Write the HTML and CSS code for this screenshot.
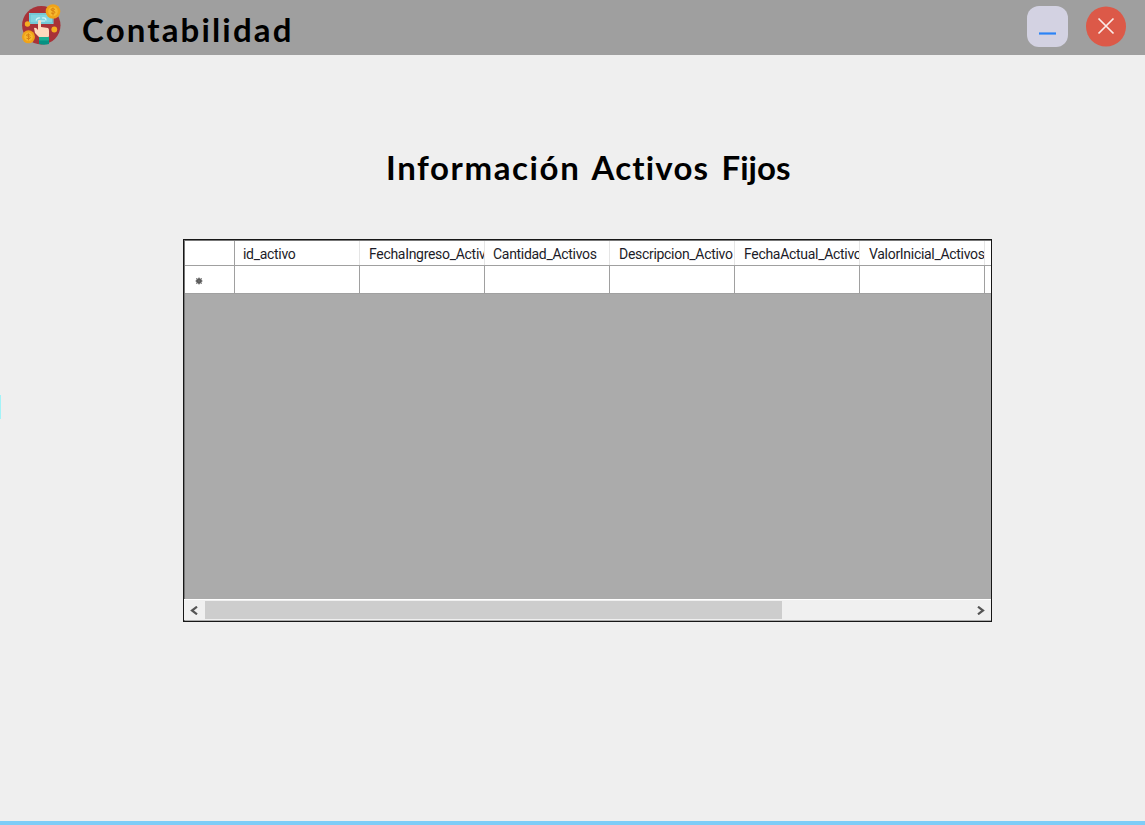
FILE: index.html
```html
<!DOCTYPE html>
<html lang="es">
<head>
<meta charset="utf-8">
<title>Contabilidad</title>
<link rel="stylesheet" href="styles.css">
</head>
<body>
<div class="window">
  <header class="titlebar">
    <svg class="logo" width="42" height="44" viewBox="0 0 42 44">
      <circle cx="21.300" cy="24.300" r="19.200" fill="#a83238"/>
      <path d="M9 12h24.500v11H9z" fill="#82d4e0"/>
      <path d="M10 13h22.500v9H10z" fill="none" stroke="#69bdcc"/>
      <path d="M16 19.500q1-3 4-2.500M22 17q4-1 4 2.500M18 20h7" fill="none" stroke="#d9f4f5" stroke-width="1.200"/>
      <path d="M18 21q0-2 1.500-2t1.500 2v5l7 1q1 .5 1 3v5l-1 2h-8l-5-5-1-5q2-1 4 2z" fill="#ffd9bd"/>
      <path d="M19 36h10v7q-5 1.500-10 0z" fill="#079183"/>
      <path d="M19 36h10v3.500H19z" fill="#1cae91"/>
      <circle cx="33" cy="10.500" r="7.300" fill="#f0a319"/>
      <circle cx="33" cy="10.500" r="4.800" fill="#f7b92e"/>
      <path d="M35 8.500q-4-2-4 .5 4 1 4 2.500-1 2-4 .5M33 6.500v8" fill="none" stroke="#d98212"/>
      <circle cx="8.500" cy="35.800" r="6.500" fill="#f0a319"/>
      <circle cx="8.500" cy="35.800" r="4.300" fill="#f7b92e"/>
      <path d="M10.500 34.300q-4-2-4 .3 4 1 4 2.300-1 1.500-4 .4M8.500 32.300v7" fill="none" stroke="#d98212"/>
      <circle cx="7.500" cy="23" r="2.700" fill="#f5ae20"/>
      <circle cx="34.300" cy="28.500" r="2.900" fill="#f5ae20"/>
    </svg>
    <h1 class="app-name">Contabilidad</h1>
    <div class="controls">
      <svg width="41" height="41" viewBox="0 0 41 41"><rect width="41" height="41" rx="12" fill="#d3d2e2"/><path d="M12 27.500h17" stroke="#2b83f6" stroke-width="2.200"/></svg>
      <svg width="40" height="41" viewBox="0 0 40 41"><circle cx="20" cy="20.500" r="20" fill="#dc5948"/><path d="M12.500 12.500l15 15M27.500 12.500l-15 15" stroke="#fbeae8" stroke-width="1.700"/></svg>
    </div>
  </header>
  <main class="content">
    <h2 class="heading"><span class="wide">Información</span> <span>Activos</span> <span class="tight">Fijos</span></h2>
    <section class="grid">
      <div class="row head">
        <div class="cell corner"></div>
        <div class="cell">id_activo</div>
        <div class="cell inset">FechaIngreso_Activ</div>
        <div class="cell">Cantidad_Activos</div>
        <div class="cell inset">Descripcion_Activo</div>
        <div class="cell inset">FechaActual_Activo</div>
        <div class="cell inset">ValorInicial_Activos</div>
        <div class="cell last"></div>
      </div>
      <div class="row new">
        <div class="cell corner"><svg width="8" height="8" viewBox="0 0 8 8"><circle cx="4" cy="4" r="2.800" fill="#4a4a4a"/><path d="M4 .5v7M.5 4h7M1.300 1.300l5.400 5.400M6.700 1.300L1.300 6.700" stroke="#666"/></svg></div>
        <div class="cell"></div><div class="cell"></div><div class="cell"></div>
        <div class="cell"></div><div class="cell"></div><div class="cell"></div>
        <div class="cell last"></div>
      </div>
      <div class="empty"></div>
      <div class="scrollbar">
        <div class="arrow"><svg width="8" height="9" viewBox="0 0 8 9"><path d="M7 .7L2 4.500l5 3.800" fill="none" stroke="#555" stroke-width="2.200"/></svg></div>
        <div class="thumb"></div>
        <div class="arrow right"><svg width="8" height="9" viewBox="0 0 8 9"><path d="M1 .7l5 3.800-5 3.800" fill="none" stroke="#555" stroke-width="2.200"/></svg></div>
      </div>
    </section>
  </main>
  <div class="side-mark"></div>
  <footer class="bottom-line"></footer>
</div>
</body>
</html>
```
FILE: styles.css
```css
* { box-sizing: border-box; }
body { margin: 0; background: #efefef; color: #000; }
.window { position: relative; display: flex; flex-direction: column; height: 825px; overflow: hidden; background: #efefef; }
.titlebar { display: flex; align-items: flex-start; flex: none; height: 55px; padding: 0 19px 0 20px; background: #9f9f9f; }
.logo { flex: none; margin-top: 1px; }
.app-name, .heading { margin: 0; font-family: "Century Gothic", Lato, sans-serif; font-weight: 700; white-space: nowrap; }
.app-name { margin: 9px 0 0 20px; font-size: 33px; line-height: 40px; letter-spacing: 2.150px; }
.controls { display: flex; gap: 18px; margin: 6px 0 0 auto; }
.content { display: flex; flex: 1; flex-direction: column; align-items: flex-start; padding: 92px 0 0 183px; }
.heading { margin: 0 0 52px 203px; font-size: 33px; line-height: 40px; letter-spacing: 1.200px; word-spacing: 3px; }
.wide { letter-spacing: 1.600px; }
.tight { letter-spacing: 0; }
.grid { display: flex; flex-direction: column; width: 809px; height: 383px; border: 1px solid #171717; box-shadow: inset 0 1px #777, inset 1px 0 #777; background: #ababab; padding: 1px 0 1px 1px; }
.row { display: flex; background: #fff; }
.head { height: 25px; border-bottom: 1px solid #a0a0a0; font: 14px/26px Roboto, sans-serif; letter-spacing: -0.300px; color: #1c1c28; }
.new { height: 28px; border-bottom: 1px solid #a0a0a0; }
.cell { flex: none; width: 125px; overflow: hidden; border-right: 1px solid #a0a0a0; white-space: nowrap; }
.head .cell { padding-left: 8px; border-right-color: #e5e5e5; }
.cell.corner { width: 50px; }
.head .cell.corner { border-right-color: #a0a0a0; }
.new .corner { display: flex; align-items: center; padding: 3px 0 0 10px; }
.head .cell.inset { padding-left: 9px; }
.cell.last { flex: 1; width: auto; border-right: 0; }
.empty { flex: 1; }
.scrollbar { display: flex; height: 21px; margin-left: -1px; border-top: 1px solid #fff; background: #f0f0f0; }
.arrow { display: flex; align-items: center; width: 21px; padding-left: 6px; }
.arrow.right { width: 20px; margin-left: auto; }
.thumb { width: 577px; height: 18px; margin-top: 1px; background: #cdcdcd; }
.side-mark { position: absolute; left: 0; top: 395px; width: 1px; height: 24px; background: #a3f3f8; }
.bottom-line { flex: none; height: 4px; background: #7ecdf7; }
```
